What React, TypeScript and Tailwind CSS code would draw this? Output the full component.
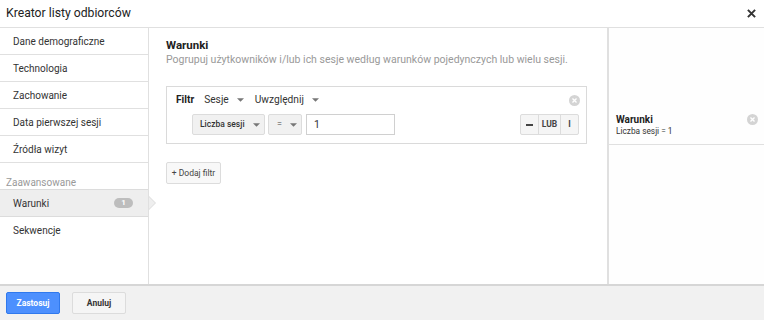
import React from "react";

const Caret = () => (
  <svg width="7" height="4" viewBox="0 0 8 4" className="ml-[8px] mt-[1px] shrink-0">
    <path d="M0 0 L8 0 L4 4 Z" fill="#777" />
  </svg>
);

const CircleX = () => (
  <svg width="11" height="11" viewBox="0 0 12 12">
    <circle cx="6" cy="6" r="6" fill="#d4d4d4" />
    <path d="M3.8 3.8 L8.2 8.2 M8.2 3.8 L3.8 8.2" stroke="#fff" strokeWidth="1.5" />
  </svg>
);

const items = ["Dane demograficzne", "Technologia", "Zachowanie", "Data pierwszej sesji", "Źródła wizyt"];

export default function App() {
  return (
    <div className="w-[764px] h-[320px] flex flex-col bg-white text-[#333] overflow-hidden" style={{ fontFamily: "Roboto, Arial, sans-serif" }}>
      <div className="h-[28px] flex items-center justify-between pl-[6px] pr-[8px] border-b border-[#e0e0e0] shrink-0">
        <span className="text-[12.2px] text-[#222]">Kreator listy odbiorców</span>
        <svg width="9" height="9" viewBox="0 0 10 10">
          <path d="M1 1 L9 9 M9 1 L1 9" stroke="#333" strokeWidth="2.2" />
        </svg>
      </div>
      <div className="flex flex-1 min-h-0">
        <div className="w-[149px] border-r border-[#e0e0e0] shrink-0 flex flex-col">
          {items.map((t) => (
            <div key={t} className="h-[27px] flex items-center pl-[13px] text-[10px] border-b border-[#e0e0e0] whitespace-nowrap">{t}</div>
          ))}
          <div className="h-[26px] flex items-end pl-[6px] text-[10px] leading-[12px] text-[#999]">Zaawansowane</div>
          <div className="relative h-[28px] flex items-center justify-between pl-[13px] pr-[15px] text-[10px] bg-[#eeeeee] border-y border-[#dcdcdc]">
            <span>Warunki</span>
            <span className="w-[19px] h-[10px] rounded-full bg-[#bdbdbd] text-white text-[8px] font-bold flex items-center justify-center leading-none">1</span>
            <div className="absolute right-[-8px] top-[6px] w-0 h-0 border-y-[7px] border-y-transparent border-l-[7px] border-l-[#dcdcdc]" />
            <div className="absolute right-[-7px] top-[7px] w-0 h-0 border-y-[6px] border-y-transparent border-l-[6px] border-l-[#eeeeee]" />
          </div>
          <div className="h-[27px] flex items-center pl-[13px] text-[10px]">Sekwencje</div>
        </div>
        <div className="flex-1 flex flex-col pl-[17px] pt-[10px] pr-[10px]">
          <div className="text-[11.5px] font-bold text-[#222] leading-[14px]">Warunki</div>
          <div className="text-[10.5px] text-[#999] leading-[14px] mt-[1px] whitespace-nowrap">Pogrupuj użytkowników i/lub ich sesje według warunków pojedynczych lub wielu sesji.</div>
          <div className="mt-[19px] w-[421px] h-[58px] border border-[#dadada] flex flex-col pl-[9px] pr-[6px] pt-[5px]">
            <div className="flex items-center h-[16px] text-[10.2px]">
              <span className="font-bold text-[#222]">Filtr</span>
              <span className="ml-[10px] flex items-center">Sesje<Caret /></span>
              <span className="ml-[11px] flex items-center">Uwzględnij<Caret /></span>
              <span className="ml-auto"><CircleX /></span>
            </div>
            <div className="flex items-center mt-[6px] pl-[16px] pr-[1px]">
              <div className="w-[73px] h-[21px] bg-[#f1f1f1] border border-[#dcdcdc] rounded-[2px] flex items-center pl-[7px] text-[8.5px] font-medium text-[#333] whitespace-nowrap">
                Liczba sesji<Caret />
              </div>
              <div className="ml-[3px] w-[34px] h-[21px] bg-[#f1f1f1] border border-[#dcdcdc] rounded-[2px] flex items-center pl-[8px] text-[9px] text-[#444]">
                =<Caret />
              </div>
              <div className="ml-[4px] w-[89px] h-[21px] border border-[#d0d0d0] flex items-center pl-[7px] text-[10.5px] text-[#333]">1</div>
              <div className="ml-auto flex h-[21px] border border-[#dcdcdc] rounded-[2px] bg-[#f5f5f5] text-[8.5px] font-bold text-[#444]">
                <div className="w-[18px] flex items-center justify-center border-r border-[#dcdcdc]"><div className="w-[7px] h-[2px] bg-[#444]" /></div>
                <div className="w-[22px] flex items-center justify-center border-r border-[#dcdcdc]">LUB</div>
                <div className="w-[17px] flex items-center justify-center">I</div>
              </div>
            </div>
          </div>
          <button className="mt-[18px] w-[55px] h-[22px] border border-[#dcdcdc] rounded-[2px] bg-[#f8f8f8] text-[8.5px] text-[#444] flex items-center justify-center whitespace-nowrap">+ Dodaj filtr</button>
        </div>
        <div className="w-[157px] border-l-2 border-[#e0e0e0] shrink-0 bg-[#fefefe] flex flex-col">
          <div className="mt-[83px] h-[34px] border-b border-[#e0e0e0] flex justify-between pl-[7px] pr-[6px] pt-[2px]">
            <div className="flex flex-col">
              <span className="text-[10px] font-bold text-[#222] leading-[13px]">Warunki</span>
              <span className="text-[8.3px] text-[#333] leading-[11px]">Liczba sesji = 1</span>
            </div>
            <div className="pt-[1px]"><CircleX /></div>
          </div>
        </div>
      </div>
      <div className="h-[36px] shrink-0 bg-[#f1f1f1] border-t-2 border-[#d6d6d6] flex items-center pl-[6px] gap-[12px]">
        <button className="w-[54px] h-[22px] bg-[#4d90fe] rounded-[2px] text-white text-[8.5px] font-bold border border-[#3079ed]">Zastosuj</button>
        <button className="w-[54px] h-[22px] bg-[#f5f5f5] rounded-[2px] text-[#333] text-[8.5px] font-bold border border-[#dcdcdc]">Anuluj</button>
      </div>
    </div>
  );
}
